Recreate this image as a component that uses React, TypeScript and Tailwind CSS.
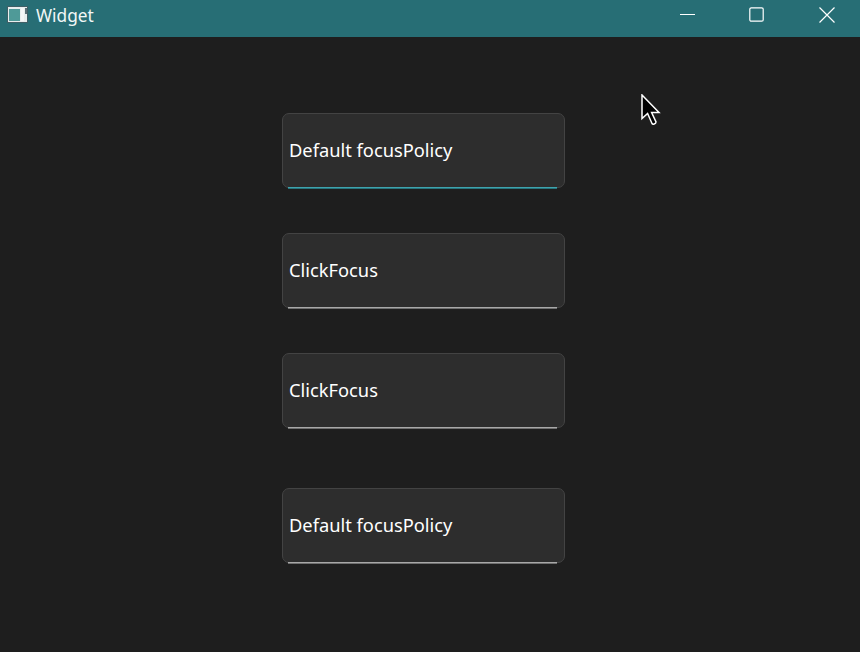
const fields = [
  { label: "Default focusPolicy", line: "border-t-[#3fa3ad] bg-[#26757e]", margin: "mt-[76px]" },
  { label: "ClickFocus", line: "border-t-[#a8a8a8] bg-[#6f6f6f]", margin: "mt-[45px]" },
  { label: "ClickFocus", line: "border-t-[#a8a8a8] bg-[#6f6f6f]", margin: "mt-[45px]" },
  { label: "Default focusPolicy", line: "border-t-[#a8a8a8] bg-[#6f6f6f]", margin: "mt-[60px]" },
]

function AppIcon() {
  return (
    <svg width="21" height="17" viewBox="0 0 21 17" className="shrink-0">
      <rect x="0.5" y="0.5" width="20" height="16" fill="#e8eeee" stroke="#3f5f66" />
      <rect x="2" y="3" width="11" height="12" fill="#4f9a98" />
      <rect x="14" y="2" width="3" height="13" fill="#f4f7f7" />
      <rect x="18" y="2" width="2" height="6" fill="#5a7076" />
    </svg>
  )
}

function TitleBar() {
  return (
    <div className="flex h-[37px] items-center bg-[#276e75] text-white">
      <div className="ml-[7px] mb-[9px]">
        <AppIcon />
      </div>
      <span className="ml-[8px] mb-[6px] text-[17.3px] font-['Noto_Sans',sans-serif] text-[#f2f7f7]">Widget</span>
      <div className="ml-auto flex h-full">
        <div className="flex w-[62px] items-center justify-center pb-[8px]">
          <svg width="15" height="2" viewBox="0 0 15 2">
            <rect width="15" height="1" fill="#ffffff" />
          </svg>
        </div>
        <div className="flex w-[76px] items-center justify-center pb-[8px]">
          <svg width="15" height="15" viewBox="0 0 15 15" fill="none" stroke="#ffffff" strokeWidth="1.2">
            <rect x="0.8" y="0.8" width="13.4" height="13.4" rx="1.5" />
          </svg>
        </div>
        <div className="flex w-[66px] items-center justify-center pb-[8px]">
          <svg width="16" height="16" viewBox="0 0 16 16" fill="none" stroke="#ffffff" strokeWidth="1.2">
            <path d="M0.5 0.5 15.5 15.5M15.5 0.5 0.5 15.5" />
          </svg>
        </div>
      </div>
    </div>
  )
}

function Cursor() {
  return (
    <svg width="20" height="32" viewBox="0 0 20 32" className="absolute left-[641px] top-[94px]">
      <path
        d="M1 1V24.5L6.6 19.5L11 29.5C11.8 30.8 14.8 30 15 28L10.6 18.5H18Z"
        fill="#000000"
        stroke="#ffffff"
        strokeWidth="1.5"
      />
    </svg>
  )
}

export default function App() {
  return (
    <div className="relative flex h-[652px] w-[860px] flex-col overflow-hidden bg-[#1e1e1e] font-['Noto_Sans',sans-serif]">
      <TitleBar />
      <div className="flex flex-col pl-[282px]">
        {fields.map((field, i) => (
          <div
            key={i}
            className={`relative flex h-[75px] w-[283px] items-center rounded-[7px] border border-[#434343] bg-[#2d2d2d] pb-[2px] pl-[6px] text-[18.3px] text-white ${field.margin}`}
          >
            {field.label}
            <div className={`absolute bottom-[-2px] left-[5px] right-[7px] h-[2px] border-t ${field.line}`} />
          </div>
        ))}
      </div>
      <Cursor />
    </div>
  )
}
